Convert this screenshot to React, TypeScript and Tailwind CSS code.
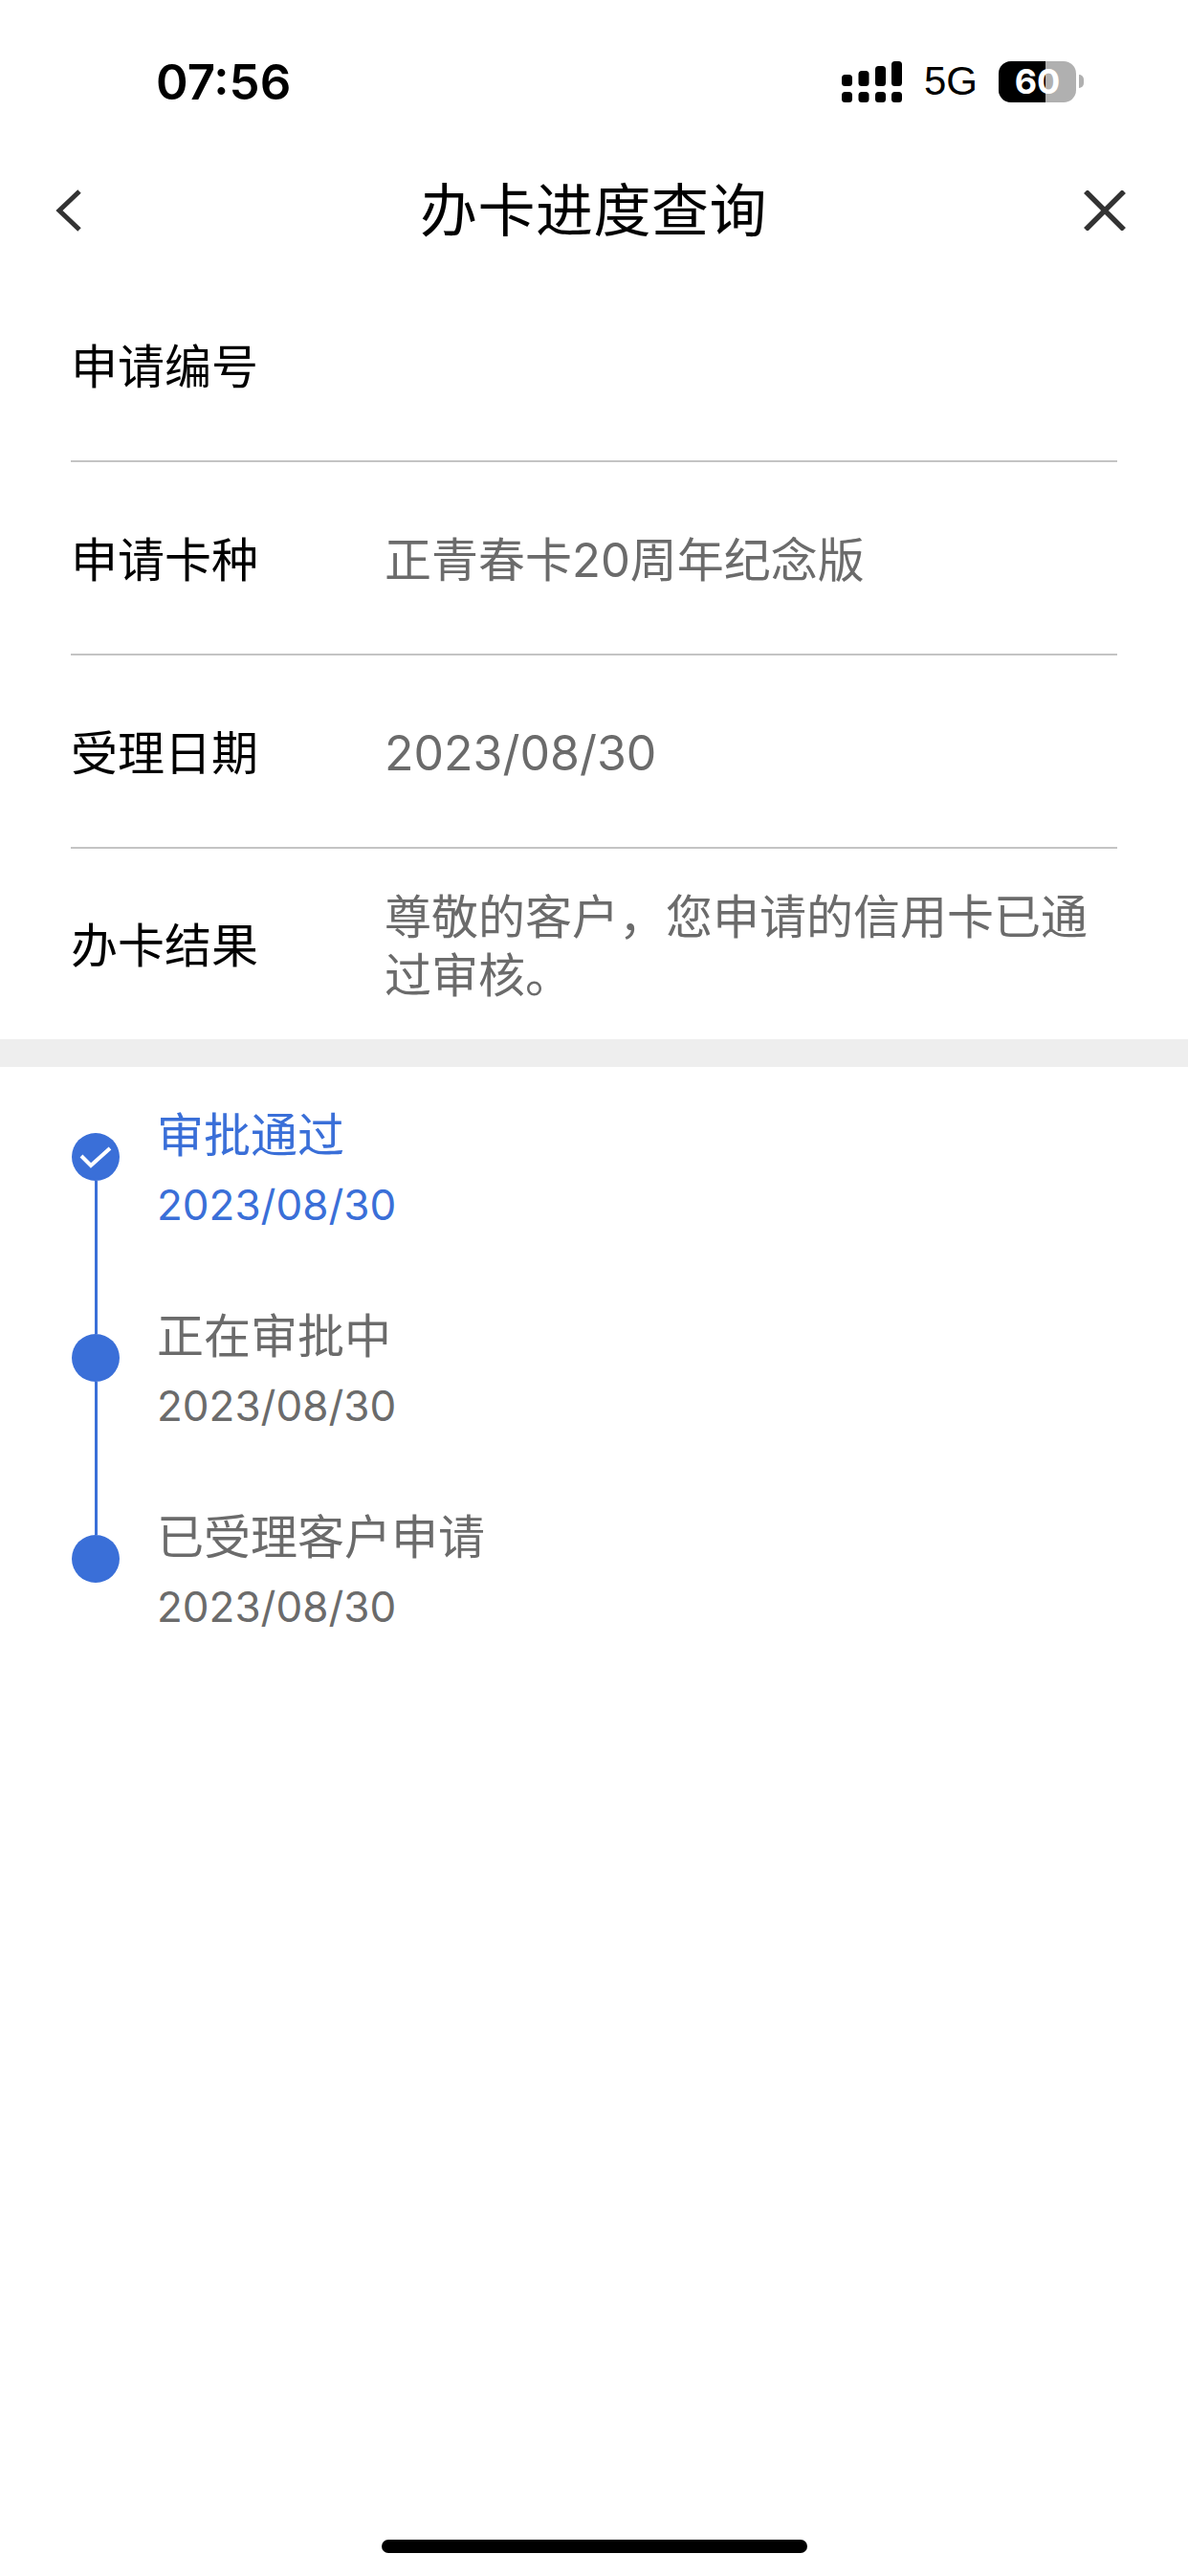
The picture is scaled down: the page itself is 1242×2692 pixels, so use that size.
const font = "font-['Inter','Noto_Sans_CJK_SC',sans-serif]";

const rows = [
  { label: "申请编号", value: "", date: false },
  { label: "申请卡种", value: "正青春卡20周年纪念版", date: false },
  { label: "受理日期", value: "2023/08/30", date: true },
];

const steps = [
  { title: "审批通过", date: "2023/08/30", active: true },
  { title: "正在审批中", date: "2023/08/30", active: false },
  { title: "已受理客户申请", date: "2023/08/30", active: false },
];

function StatusBar() {
  return (
    <div className="flex h-[170px] items-center pl-[163px] pr-[109px]">
      <span className="text-[51px] leading-none font-semibold text-black">07:56</span>
      <div className="ml-auto flex items-center">
        <svg width="63" height="43" viewBox="0 0 63 43" fill="#000">
          <rect x="0" y="14" width="11" height="12" rx="3.5" />
          <rect x="17.5" y="10" width="11" height="16" rx="3.5" />
          <rect x="35" y="5" width="11" height="21" rx="3.5" />
          <rect x="52" y="0" width="11" height="26" rx="3.5" />
          <rect x="0" y="32" width="11" height="11" rx="3.5" />
          <rect x="17.5" y="32" width="11" height="11" rx="3.5" />
          <rect x="35" y="32" width="11" height="11" rx="3.5" />
          <rect x="52" y="32" width="11" height="11" rx="3.5" />
        </svg>
        <span className="ml-[23px] text-[42px] leading-none text-black font-['Liberation_Sans',sans-serif]">5G</span>
        <div className="relative ml-[22px] flex h-[43px] w-[81px] overflow-hidden rounded-[13px] bg-[#b0b0b0]">
          <div className="w-[49px] bg-black" />
          <span className="absolute inset-0 flex items-center justify-center text-[36px] leading-none font-bold text-white">60</span>
        </div>
        <div className="ml-[3px] h-[14px] w-[5px] rounded-r-full bg-[#b0b0b0]" />
      </div>
    </div>
  );
}

function NavBar() {
  return (
    <div className="mb-[15px] grid h-[100px] grid-cols-[1fr_auto_1fr] items-center pl-[58px] pr-[65px]">
      <svg width="28" height="44" viewBox="0 0 28 44" fill="none" stroke="#333" strokeWidth="5">
        <path d="M25 2 L4 22 L25 42" />
      </svg>
      <span className="text-[60px] leading-none tracking-[0.5px] text-black translate-x-[3px]">办卡进度查询</span>
      <svg className="justify-self-end" width="44" height="42" viewBox="0 0 44 42" fill="none" stroke="#333" strokeWidth="5.5">
        <path d="M2 1 L42 41 M42 1 L2 41" />
      </svg>
    </div>
  );
}

export default function App() {
  return (
    <div className={`flex h-[2692px] w-[1242px] flex-col overflow-hidden bg-white ${font}`}>
      <StatusBar />
      <NavBar />

      <div className="px-[74px]">
        {rows.map((r) => (
          <div key={r.label} className="mb-[4px] flex h-[198px] items-center border-b-2 border-[#c4c4c4]">
            <span className="w-[328px] text-[49px] leading-none text-black">{r.label}</span>
            <span className={`leading-none text-[#6b6b6b] ${r.date ? "text-[50px]" : "text-[49px]"}`}>{r.value}</span>
          </div>
        ))}
        <div className="flex h-[195px] items-center">
          <span className="w-[328px] shrink-0 text-[49px] leading-none text-black">办卡结果</span>
          <span className="text-[49px] leading-[61px] text-[#6b6b6b]">尊敬的客户，您申请的信用卡已通过审核。</span>
        </div>
      </div>

      <div className="h-[29px] bg-[#eeeeee]" />

      <div className="flex flex-col pl-[75px] pt-[69px]">
        {steps.map((s, i) => (
          <div key={s.title} className="flex h-[210px]">
            <div className="flex w-[50px] flex-col items-center">
              <div className="flex h-[50px] w-[50px] shrink-0 items-center justify-center rounded-full bg-[#3a6fd8]">
                {s.active && (
                  <svg width="34" height="24" viewBox="0 0 34 24" fill="none" stroke="#fff" strokeWidth="4">
                    <path d="M2 11 L12 21 L32 3" />
                  </svg>
                )}
              </div>
              {i < steps.length - 1 && <div className="w-[3px] flex-1 bg-[#3a6fd8]" />}
            </div>
            <div className={`-mt-[25px] ml-[39px] ${s.active ? "text-[#3a6fd8]" : "text-[#6b6b6b]"}`}>
              <div className="text-[49px] leading-[56px]">{s.title}</div>
              <div className="mt-[19px] text-[44px] leading-[50px]">{s.date}</div>
            </div>
          </div>
        ))}
      </div>

      <div className="mx-auto mb-[24px] mt-auto h-[14px] w-[445px] rounded-full bg-black" />
    </div>
  );
}
